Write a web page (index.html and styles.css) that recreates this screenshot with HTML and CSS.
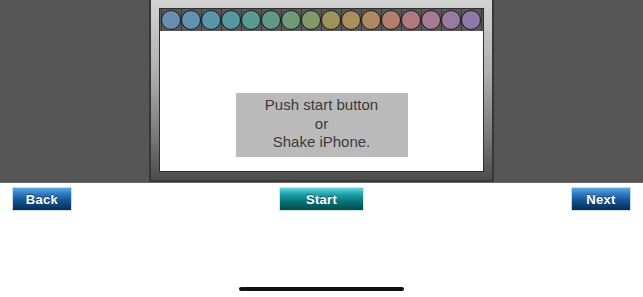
FILE: index.html
```html
<!DOCTYPE html>
<html>
<head>
<meta charset="utf-8">
<link rel="stylesheet" href="styles.css">
</head>
<body>
<div class="stage">
  <div class="frame">
    <div class="screen">
      <div class="dots">
        <span class="dot" style="background:#6a8db2"></span>
        <span class="dot" style="background:#6093b1"></span>
        <span class="dot" style="background:#5996a9"></span>
        <span class="dot" style="background:#57989f"></span>
        <span class="dot" style="background:#5a9a92"></span>
        <span class="dot" style="background:#619a84"></span>
        <span class="dot" style="background:#6f9a76"></span>
        <span class="dot" style="background:#829a68"></span>
        <span class="dot" style="background:#a0935a"></span>
        <span class="dot" style="background:#a98f5c"></span>
        <span class="dot" style="background:#b08862"></span>
        <span class="dot" style="background:#b0806c"></span>
        <span class="dot" style="background:#b07a7e"></span>
        <span class="dot" style="background:#a67a90"></span>
        <span class="dot" style="background:#9b7aa0"></span>
        <span class="dot" style="background:#9078a8"></span>
      </div>
      <div class="board">
        <div class="message">Push start button<br>or<br>Shake iPhone.</div>
      </div>
    </div>
  </div>
</div>
<div class="controls">
  <button class="btn btn-blue">Back</button>
  <button class="btn btn-teal">Start</button>
  <button class="btn btn-blue">Next</button>
</div>
<div class="home-row"><div class="home-bar"></div></div>
</body>
</html>
```
FILE: styles.css
```css
html, body {
  margin: 0;
  padding: 0;
  background: #ffffff;
  font-family: "Liberation Sans", Arial, sans-serif;
}
.stage {
  height: 183px;
  background: #565656;
  display: flex;
  justify-content: center;
  align-items: flex-end;
  box-shadow: inset 0 -1px 0 #6a6a6a;
}
.frame {
  box-sizing: border-box;
  width: 345px;
  height: 184px;
  margin-top: -1px;
  margin-bottom: 1px;
  border: 2px solid #383838;
  background: linear-gradient(#d2d2d2 0%, #b0b0b0 40%, #7a7a7a 75%, #4c4c4c 100%);
  padding: 8px;
}
.screen {
  box-sizing: border-box;
  height: 100%;
  border: 1px solid #2e2e2e;
  background: #ffffff;
  display: flex;
  flex-direction: column;
}
.dots {
  display: flex;
  height: 22px;
  padding: 1px 1px 0 1px;
  box-sizing: border-box;
  background: #585858;
  background-image: linear-gradient(90deg, rgba(0,0,0,0.35) 1px, transparent 1px);
  background-size: 20px 100%;
  background-position: 1px 0;
}
.dot {
  box-sizing: border-box;
  width: 20px;
  height: 20px;
  border-radius: 50%;
  border: 1px solid #1c1c22;
  flex: none;
}
.board {
  flex: 1;
  display: flex;
  justify-content: center;
  align-items: flex-start;
  padding-top: 62px;
}
.message {
  width: 172px;
  height: 64px;
  box-sizing: border-box;
  background: #bababa;
  color: #3a3a3a;
  font-size: 15px;
  line-height: 18.5px;
  text-align: center;
  padding-top: 3px;
}
.controls {
  display: flex;
  justify-content: space-between;
  align-items: center;
  padding: 5px 13px 0 13px;
}
.btn {
  height: 22px;
  border: none;
  padding: 0;
  color: #ffffff;
  font-family: "Liberation Sans", Arial, sans-serif;
  font-weight: bold;
  font-size: 13px;
  letter-spacing: 0.3px;
  text-shadow: 0 -1px 0 rgba(0,0,0,0.4);
}
.btn-blue {
  width: 58px;
  background: linear-gradient(#5aa6e4 0%, #2a76bc 30%, #12508e 60%, #0a2d52 100%);
  box-shadow: 0 0 0 1px #c8dcee;
}
.btn-teal {
  width: 83px;
  background: linear-gradient(#62d6dc 0%, #1aa0a6 30%, #0a7478 60%, #044a4e 100%);
  box-shadow: 0 0 0 1px #c8eaea;
}
.home-row {
  display: flex;
  justify-content: center;
  padding-top: 77px;
}
.home-bar {
  width: 165px;
  height: 4px;
  border-radius: 2px;
  background: #111111;
}
```
